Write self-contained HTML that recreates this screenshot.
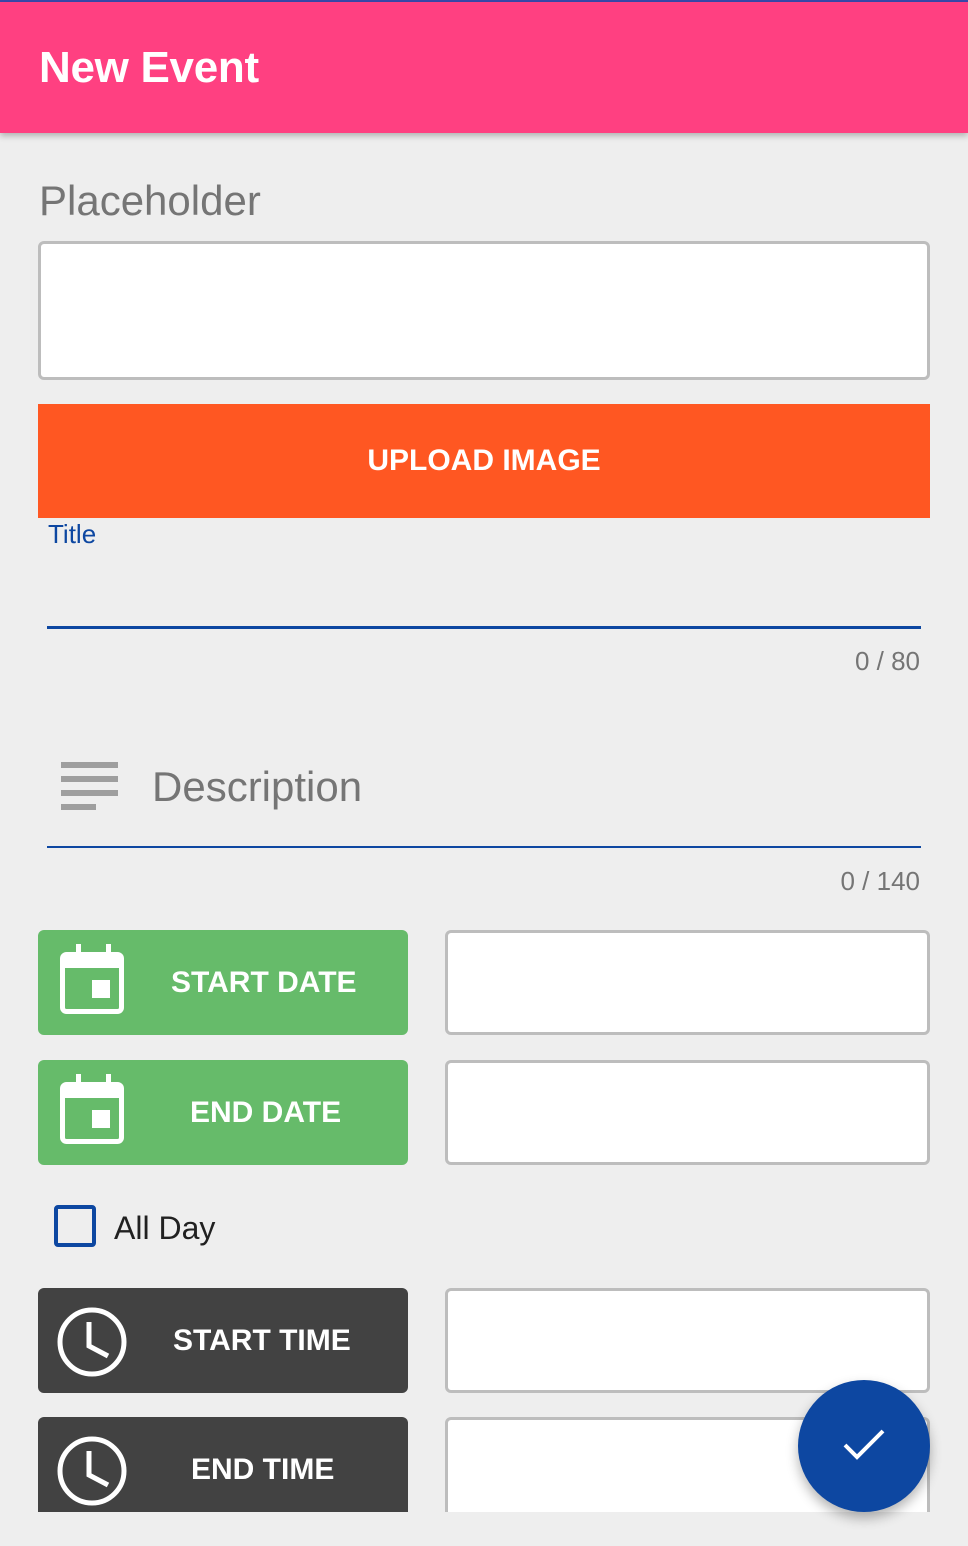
<!DOCTYPE html>
<html><head><meta charset="utf-8"><style>
*{margin:0;padding:0;box-sizing:border-box}
body{width:968px;height:1546px;background:#eeeeee;font-family:"Liberation Sans",Arial,sans-serif;position:relative;overflow:hidden}
.a{position:absolute}
.box{position:absolute;background:#fff;border:3px solid #bdbdbd;border-radius:6px}
.btn{position:absolute;border-radius:6px;color:#fff;font-size:30px;font-weight:bold}
.btn span{position:absolute;top:0;bottom:0;display:flex;align-items:center}
</style></head><body>
<div class="a" style="left:0;top:0;width:968px;height:2px;background:#3949ab"></div>
<div class="a" style="left:0;top:2px;width:968px;height:131px;background:#ff4081;box-shadow:0 3px 6px rgba(0,0,0,.25)"></div>
<div class="a" style="left:39px;top:43px;font-size:44px;color:#fff;font-weight:bold;letter-spacing:-0.3px">New Event</div>
<div class="a" style="left:39px;top:177px;font-size:42px;color:#757575">Placeholder</div>
<div class="box" style="left:38px;top:241px;width:892px;height:139px"></div>
<div class="a" style="left:38px;top:404px;width:892px;height:114px;background:#ff5722;color:#fff;font-size:30px;font-weight:bold;display:flex;align-items:center;justify-content:center">UPLOAD IMAGE</div>
<div class="a" style="left:48px;top:519px;font-size:26px;color:#0d47a1">Title</div>
<div class="a" style="left:47px;top:626px;width:874px;height:3px;background:#0d47a1"></div>
<div class="a" style="right:48px;top:646px;font-size:26px;color:#757575">0 / 80</div>
<svg class="a" style="left:61px;top:762px" width="57" height="48"><g fill="#9e9e9e"><rect y="0" width="57" height="6"/><rect y="14" width="57" height="6"/><rect y="28" width="57" height="6"/><rect y="42" width="35" height="6"/></g></svg>
<div class="a" style="left:152px;top:763px;font-size:42px;color:#757575">Description</div>
<div class="a" style="left:47px;top:846px;width:874px;height:2px;background:#0d47a1"></div>
<div class="a" style="right:48px;top:866px;font-size:26px;color:#757575">0 / 140</div>

<div class="btn" style="left:38px;top:930px;width:370px;height:105px;background:#66bb6a">
<svg class="a" style="left:22px;top:14px" width="64" height="70"><rect x="2.5" y="10.5" width="59" height="57" rx="4" fill="none" stroke="#fff" stroke-width="5"/><rect x="2" y="10" width="60" height="14" fill="#fff"/><rect x="16" y="0" width="5" height="12" fill="#fff"/><rect x="46" y="0" width="5" height="12" fill="#fff"/><rect x="32" y="36" width="18" height="18" fill="#fff"/></svg>
<span style="left:133px">START DATE</span></div>
<div class="box" style="left:445px;top:930px;width:485px;height:105px"></div>
<div class="btn" style="left:38px;top:1060px;width:370px;height:105px;background:#66bb6a">
<svg class="a" style="left:22px;top:14px" width="64" height="70"><rect x="2.5" y="10.5" width="59" height="57" rx="4" fill="none" stroke="#fff" stroke-width="5"/><rect x="2" y="10" width="60" height="14" fill="#fff"/><rect x="16" y="0" width="5" height="12" fill="#fff"/><rect x="46" y="0" width="5" height="12" fill="#fff"/><rect x="32" y="36" width="18" height="18" fill="#fff"/></svg>
<span style="left:152px">END DATE</span></div>
<div class="box" style="left:445px;top:1060px;width:485px;height:105px"></div>

<div class="a" style="left:54px;top:1205px;width:42px;height:42px;border:4px solid #0d47a1;border-radius:4px"></div>
<div class="a" style="left:114px;top:1210px;font-size:32px;color:#212121">All Day</div>

<div class="btn" style="left:38px;top:1288px;width:370px;height:105px;background:#424242">
<svg class="a" style="left:18px;top:18px" width="72" height="72"><circle cx="36" cy="36" r="32" fill="none" stroke="#fff" stroke-width="5"/><path d="M33 16V40L52 50" fill="none" stroke="#fff" stroke-width="5"/></svg>
<span style="left:135px">START TIME</span></div>
<div class="box" style="left:445px;top:1288px;width:485px;height:105px"></div>
<div class="a" style="left:0;top:1417px;width:968px;height:95px;overflow:hidden">
<div class="btn" style="left:38px;top:0;width:370px;height:120px;background:#424242">
<svg class="a" style="left:18px;top:18px" width="72" height="72"><circle cx="36" cy="36" r="32" fill="none" stroke="#fff" stroke-width="5"/><path d="M33 16V40L52 50" fill="none" stroke="#fff" stroke-width="5"/></svg>
<span style="left:153px;height:105px">END TIME</span></div>
<div class="box" style="left:445px;top:0;width:485px;height:120px"></div>
</div>
<div class="a" style="left:798px;top:1380px;width:132px;height:132px;border-radius:50%;background:#0d47a1;box-shadow:0 6px 12px rgba(0,0,0,.3)">
<svg class="a" style="left:44px;top:48px" width="44" height="34"><path d="M3 17L15 29L41 3" fill="none" stroke="#fff" stroke-width="4"/></svg></div>
</body></html>
